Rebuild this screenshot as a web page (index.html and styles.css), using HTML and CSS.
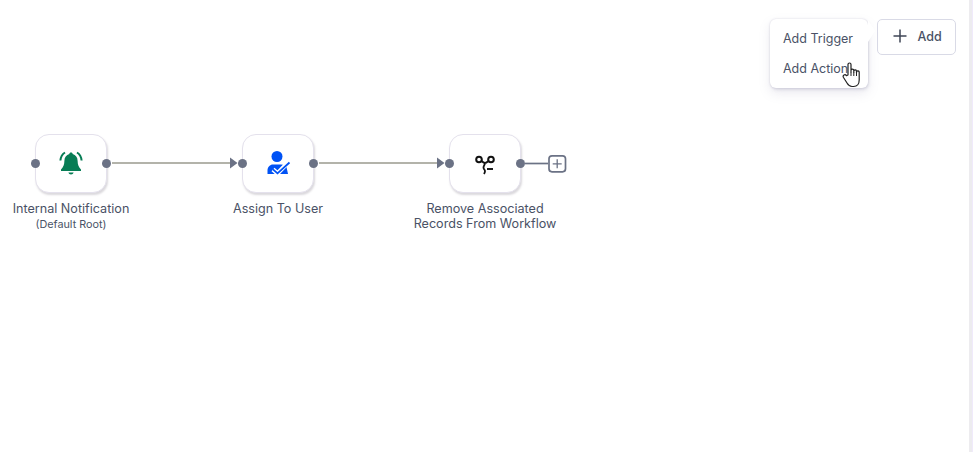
FILE: index.html
```html
<!DOCTYPE html>
<html lang="en">
<head>
    <meta charset="UTF-8">
    <title>Workflow</title>
    <link rel="stylesheet" href="styles.css">
</head>
<body>
    <div class="canvas">
        <div class="toolbar">
            <button class="add-button">
                <svg class="add-icon" width="14" height="14" viewBox="0 0 14 14"><path d="M7 .5v13M.5 7h13" stroke="#3f4656" stroke-width="1.500" fill="none"/></svg>
                <span>Add</span>
            </button>
        </div>

        <div class="add-menu">
            <div class="add-menu-item">Add Trigger</div>
            <div class="add-menu-item">Add Action</div>
            <span class="menu-tail"></span>
        </div>

        <svg class="edges" width="600" height="60" viewBox="0 0 600 60">
            <path d="M112 29H231M319 29H438" stroke="#b3b3aa" stroke-width="2" fill="none"/>
            <path d="M230 23.500l7.500 5.500-7.500 5.500zM437 23.500l7.500 5.500-7.500 5.500z" fill="#6b7285"/>
            <path d="M525 29.500H548" stroke="#6b7285" stroke-width="1.700" fill="none"/>
            <rect x="549" y="21.800" width="16.500" height="16" rx="3" fill="#fff" stroke="#6b7285" stroke-width="1.700"/>
            <path d="M557.200 25.300v9M552.700 29.800h9" stroke="#6b7285" stroke-width="1.300" fill="none"/>
        </svg>

        <div class="node node-first">
            <div class="node-box">
                <span class="port port-in"></span>
                <svg width="26" height="26" viewBox="0 0 26 26">
                    <path d="M13 1.500c-1 0-1.700.7-1.700 1.500-3 .8-4.900 3.300-4.900 6.800 0 4-1.200 6.600-3.400 8.700v1.500h20v-1.500c-2.200-2.100-3.400-4.700-3.400-8.700 0-3.500-1.900-6-4.900-6.800 0-.8-.7-1.500-1.700-1.500z" fill="#077d55"/>
                    <path d="M10.400 21.500h5.200c-.3 1.300-1.300 2-2.600 2s-2.300-.7-2.600-2z" fill="#077d55"/>
                    <path d="M7 1.500C4 3.300 2.700 6 2.400 9.500M19 1.500c3 1.800 4.300 4.500 4.600 8" stroke="#077d55" stroke-width="2" fill="none"/>
                </svg>
                <span class="port port-out"></span>
            </div>
            <div class="node-label">Internal Notification<small>(Default Root)</small></div>
        </div>

        <div class="node node-second">
            <div class="node-box">
                <span class="port port-in"></span>
                <svg width="26" height="26" viewBox="0 0 26 26">
                    <circle cx="12" cy="5.500" r="5.500" fill="#0052f5"/>
                    <path d="M2.500 23v-4c0-3 2.500-5.500 5.500-5.500h8c2.500 0 4.500 1 5.500 2.500L23 23z" fill="#0052f5"/>
                    <path d="M8 18.500l4.500 4 11-11.500" stroke="#fff" stroke-width="4.500" fill="none"/>
                    <path d="M8 18.300l4.500 4L24.500 11.500" stroke="#0052f5" stroke-width="1.800" fill="none"/>
                </svg>
                <span class="port port-out"></span>
            </div>
            <div class="node-label">Assign To User</div>
        </div>

        <div class="node node-third">
            <div class="node-box">
                <span class="port port-in"></span>
                <svg width="24" height="24" viewBox="0 0 24 24">
                    <circle cx="6" cy="7.500" r="2.800" stroke="#111" stroke-width="2" fill="none"/>
                    <circle cx="18" cy="7.500" r="2.800" stroke="#111" stroke-width="2" fill="none"/>
                    <path d="M8.500 9c1.500 1.300 2.500 2 3.500 2s2-.7 3.500-2M12 11c0 2-1.500 2.500-1.500 4.500s1.500 2 1.500 3.700c0 1-.5 2-1 2.800" stroke="#111" stroke-width="1.800" fill="none"/>
                    <path d="M14 17h6" stroke="#111" stroke-width="1.900" fill="none"/>
                </svg>
                <span class="port port-out"></span>
            </div>
            <div class="node-label">Remove Associated<br>Records From Workflow</div>
        </div>

        <svg class="hand-cursor" width="20" height="27" viewBox="0 0 20 27">
            <path d="M6 14V3.500a1.500 1.500 0 0 1 3 0V11V9.500a1.400 1.400 0 0 1 2.800 0V11.500V10a1.400 1.400 0 0 1 2.700 0v2V11a1.400 1.400 0 0 1 2.700 0v8c0 3.500-2 6.500-5.500 6.500H10c-2.500 0-3.700-1.300-5-3.500L1.500 16.500c-.6-1-.3-2 .5-2.500s1.800-.2 2.400.6z" fill="#fff" stroke="#222" stroke-width="1.200" stroke-linejoin="round"/>
            <path d="M9 11v4M11.800 11.500v3.500M14.500 12v3" stroke="#222" stroke-width="1" fill="none"/>
        </svg>

        <div class="page-scroll"></div>
    </div>
</body>
</html>
```

FILE: styles.css
```css
html, body {
    margin: 0;
    padding: 0;
    height: 100%;
    background-color: #fff;
    overflow: hidden;
}

body {
    font-family: Inter, "Liberation Sans", sans-serif;
    color: #4a5266;
}

.canvas {
    position: relative;
    width: 980px;
    height: 452px;
}

.toolbar {
    display: flex;
    justify-content: flex-end;
    padding: 19px 24px 0 0;
}

.add-button {
    display: flex;
    align-items: center;
    justify-content: center;
    gap: 10px;
    width: 79px;
    height: 36px;
    padding: 0 0 2px 2px;
    background-color: #fff;
    border: 1px solid #d9dae6;
    border-radius: 5px;
    font-family: inherit;
    font-size: 12.5px;
    font-weight: 500;
    color: #4a5266;
}

.add-menu {
    position: absolute;
    left: 770px;
    top: 19px;
    width: 98px;
    height: 69px;
    box-sizing: border-box;
    padding: 5px 0;
    background-color: #fff;
    border-radius: 6px;
    box-shadow: 0 0 2px rgba(130, 125, 160, 0.3), 1px 2px 3px rgba(130, 125, 160, 0.18), 0 5px 12px rgba(130, 125, 160, 0.16);
}

.add-menu-item {
    height: 30px;
    padding-left: 13px;
    font-size: 12.5px;
    line-height: 29px;
    white-space: nowrap;
}

.menu-tail {
    position: absolute;
    right: -7px;
    top: 1px;
    width: 0;
    height: 0;
    border-top: 11px solid transparent;
    border-bottom: 11px solid transparent;
    border-left: 7px solid #fff;
}

.edges {
    position: absolute;
    left: 0;
    top: 134px;
}

.node {
    position: absolute;
    top: 134px;
    width: 150px;
}

.node-first { left: -4px; }
.node-second { left: 203px; }
.node-third { left: 410px; }

.node-box {
    position: relative;
    display: flex;
    align-items: center;
    justify-content: center;
    box-sizing: border-box;
    width: 72px;
    height: 59px;
    margin: 0 auto;
    background-color: #fff;
    border: 1px solid #e4e1ec;
    border-radius: 14px;
    box-shadow: 1px 2px 2px rgba(110, 105, 120, 0.25);
}

.port {
    position: absolute;
    top: 24px;
    width: 9px;
    height: 9px;
    background-color: #6b7285;
    border-radius: 50%;
}

.port-in { left: -5px; }
.port-out { right: -5px; }

.node-label {
    margin-top: 8px;
    font-size: 12.6px;
    line-height: 15px;
    text-align: center;
}

.node-label small {
    display: block;
    margin-top: 1px;
    font-size: 10.800px;
    line-height: 15px;
}

.hand-cursor {
    position: absolute;
    left: 842px;
    top: 61px;
}

.page-scroll {
    position: absolute;
    left: 969px;
    top: 0;
    width: 3px;
    height: 452px;
    background-color: #edecef;
    border-right: 1px solid #f0eafb;
}
```
